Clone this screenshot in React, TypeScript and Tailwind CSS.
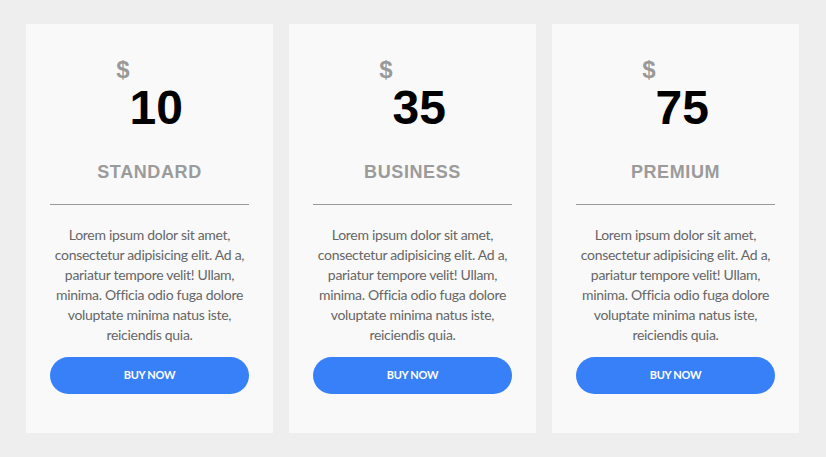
import React from "react";

const plans = [
  { price: "10", name: "STANDARD" },
  { price: "35", name: "BUSINESS" },
  { price: "75", name: "PREMIUM" },
];

const text =
  "Lorem ipsum dolor sit amet, consectetur adipisicing elit. Ad a, pariatur tempore velit! Ullam, minima. Officia odio fuga dolore voluptate minima natus iste, reiciendis quia.";

export default function App() {
  return (
    <div className="min-h-screen bg-[#eeeeee] pt-[24px] pl-[26px]">
      <div className="flex gap-[16px]">
        {plans.map((p) => (
          <div
            key={p.name}
            className="w-[247px] h-[409px] bg-[#f9f9f9] px-[24px] pt-[34px] flex flex-col"
          >
            <div
              className="flex justify-center items-start font-bold"
              style={{ fontFamily: '"Liberation Sans", Arial, sans-serif' }}
            >
              <span className="text-[24px] leading-none text-[#999999]">$</span>
              <span className="text-[48px] leading-none text-black mt-[26px]">
                {p.price}
              </span>
            </div>
            <div
              className="mt-[31px] text-center text-[18px] leading-none font-bold tracking-[0.6px] text-[#9b9b9b]"
              style={{ fontFamily: '"Liberation Sans", Arial, sans-serif' }}
            >
              {p.name}
            </div>
            <div className="mt-[23px] h-px bg-[#9a9a9a]" />
            <p
              className="mt-[20px] text-center text-[14px] leading-[20px] tracking-[-0.3px] text-[#666666]"
              style={{ fontFamily: "Lato, sans-serif" }}
            >
              {text}
            </p>
            <button
              className="mt-[12px] h-[37px] w-full rounded-full bg-[#3780f7] text-white text-[11px] tracking-[-0.3px] font-bold"
              style={{ fontFamily: "Lato, sans-serif" }}
            >
              BUY NOW
            </button>
          </div>
        ))}
      </div>
    </div>
  );
}
